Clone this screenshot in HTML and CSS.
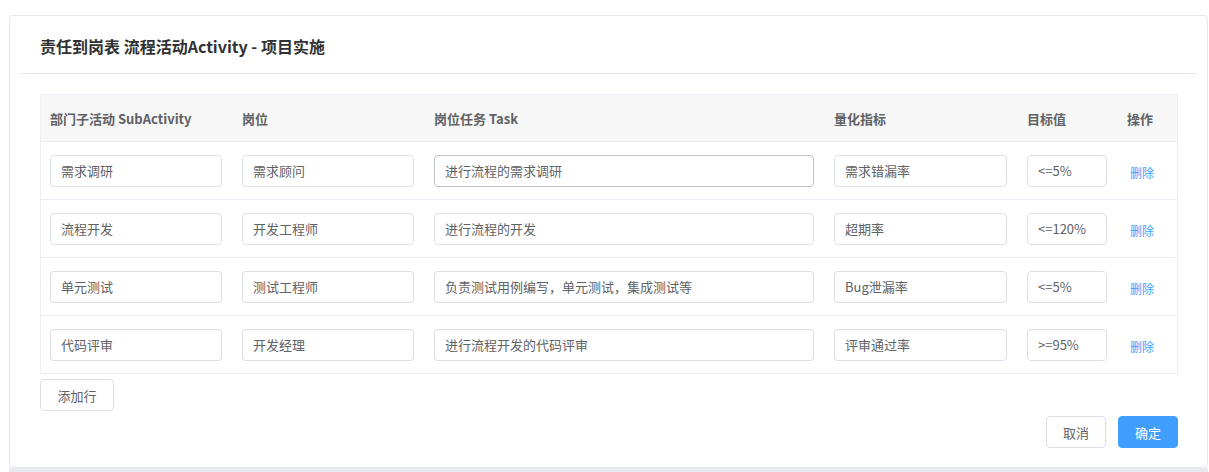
FILE: index.html
```html
<!DOCTYPE html>
<html lang="zh-CN">
<head>
<meta charset="utf-8">
<title>责任到岗表</title>
<link rel="stylesheet" href="styles.css">
</head>
<body>
<div class="page">
  <div class="card">
    <div class="card-header">
      <h2 class="card-title">责任到岗表 流程活动Activity - 项目实施</h2>
    </div>
    <div class="card-body">
      <table class="grid">
        <colgroup>
          <col class="c1"><col class="c2"><col class="c3"><col class="c4"><col class="c5"><col class="c6">
        </colgroup>
        <thead>
          <tr>
            <th>部门子活动 SubActivity</th>
            <th>岗位</th>
            <th>岗位任务 Task</th>
            <th>量化指标</th>
            <th>目标值</th>
            <th>操作</th>
          </tr>
        </thead>
        <tbody>
          <tr>
            <td><input class="inp" value="需求调研"></td>
            <td><input class="inp" value="需求顾问"></td>
            <td><input class="inp hover" value="进行流程的需求调研"></td>
            <td><input class="inp" value="需求错漏率"></td>
            <td><input class="inp" value="<=5%"></td>
            <td><a class="del">删除</a></td>
          </tr>
          <tr>
            <td><input class="inp" value="流程开发"></td>
            <td><input class="inp" value="开发工程师"></td>
            <td><input class="inp" value="进行流程的开发"></td>
            <td><input class="inp" value="超期率"></td>
            <td><input class="inp" value="<=120%"></td>
            <td><a class="del">删除</a></td>
          </tr>
          <tr>
            <td><input class="inp" value="单元测试"></td>
            <td><input class="inp" value="测试工程师"></td>
            <td><input class="inp" value="负责测试用例编写，单元测试，集成测试等"></td>
            <td><input class="inp" value="Bug泄漏率"></td>
            <td><input class="inp" value="<=5%"></td>
            <td><a class="del">删除</a></td>
          </tr>
          <tr>
            <td><input class="inp" value="代码评审"></td>
            <td><input class="inp" value="开发经理"></td>
            <td><input class="inp" value="进行流程开发的代码评审"></td>
            <td><input class="inp" value="评审通过率"></td>
            <td><input class="inp" value=">=95%"></td>
            <td><a class="del">删除</a></td>
          </tr>
        </tbody>
      </table>
      <div class="add-row">
        <button class="btn add">添加行</button>
      </div>
      <div class="footer">
        <button class="btn">取消</button>
        <button class="btn primary">确定</button>
      </div>
    </div>
  </div>
  <div class="shadow-strip"></div>
</div>
</body>
</html>
```
FILE: styles.css
```css
* { box-sizing: border-box; }
html, body {
  margin: 0;
  padding: 0;
  background: #ffffff;
  font-family: "Noto Sans CJK SC", "Noto Sans", sans-serif;
  color: #606266;
}
.page {
  padding: 15px 1px 0 9px;
}
.card {
  width: 1199px;
  border: 1px solid #e4e7ed;
  border-radius: 4px;
  background: #fff;
}
.card-header {
  margin: 0 10px;
  padding: 14px 20px 0 20px;
  height: 58px;
  border-bottom: 1px solid #e4e7ed;
}
.card-title {
  margin: 0;
  font-size: 16px;
  line-height: 32px;
  font-weight: 700;
  color: #303133;
}
.card-body {
  padding: 20px 29px 19px 30px;
}
.grid {
  width: 1138px;
  table-layout: fixed;
  border-collapse: collapse;
  border: none;
  outline: 1px solid #ebeef5;
  outline-offset: -1px;
}
.c1 { width: 192px; }
.c2 { width: 192px; }
.c3 { width: 400px; }
.c4 { width: 193px; }
.c5 { width: 100px; }
.c6 { width: 61px; }
.grid th {
  background: #f7f7f7;
  height: 47px;
  padding: 0 10px;
  text-align: left;
  font-size: 13px;
  font-weight: 700;
  color: #606266;
  border-top: 1px solid #ebeef5;
  border-bottom: 1px solid #ebeef5;
}
.grid td {
  height: 58px;
  padding: 0 10px;
  border-bottom: 1px solid #ebeef5;
  vertical-align: middle;
}
.inp {
  display: block;
  width: 100%;
  height: 32px;
  border: 1px solid #dcdfe6;
  border-radius: 4px;
  padding: 0 10px;
  font-family: "Noto Sans CJK SC", "Noto Sans", sans-serif;
  font-size: 13px;
  color: #606266;
  background: #fff;
  outline: none;
}
.inp.hover { border-color: #c0c4cc; }
.del {
  display: inline-block;
  margin-left: 3px;
  margin-top: 4px;
  font-size: 12px;
  color: #409eff;
  cursor: pointer;
}
.add-row {
  margin-top: 5px;
}
.btn {
  height: 32px;
  padding: 0 14px;
  border: 1px solid #dcdfe6;
  border-radius: 4px;
  background: #fff;
  font-family: "Noto Sans CJK SC", "Noto Sans", sans-serif;
  font-size: 13px;
  color: #606266;
  cursor: pointer;
}
.btn.add { width: 74px; padding: 0; }
.footer {
  margin-top: 5px;
  display: flex;
  justify-content: flex-end;
  gap: 12px;
}
.footer .btn { width: 60px; padding: 0; }
.btn.primary {
  background: #409eff;
  border-color: #409eff;
  color: #fff;
}
.shadow-strip {
  height: 6px;
  width: 1199px;
  background: #e8eaee;
}
```
